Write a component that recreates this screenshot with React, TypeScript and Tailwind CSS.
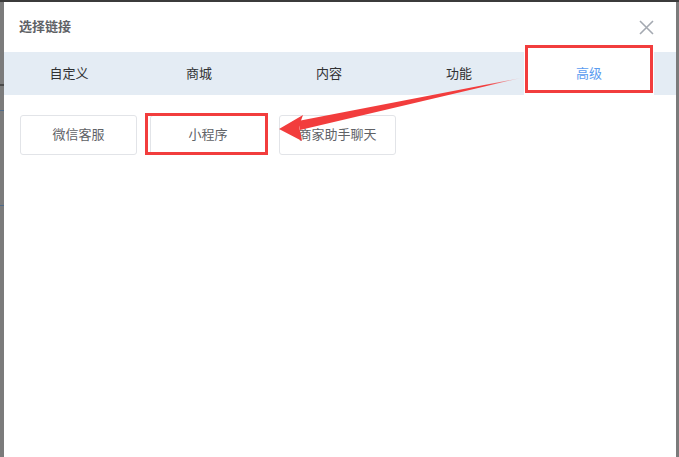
import React from 'react';

const tabs = ['自定义', '商城', '内容', '功能', '高级'];
const links = ['微信客服', '小程序', '商家助手聊天'];

export default function App() {
  const active = 4;
  return (
    <div
      className="relative w-[679px] h-[457px] overflow-hidden bg-[#7b7b7b]"
      style={{ fontFamily: '"Liberation Sans", "Noto Sans CJK SC", sans-serif' }}
    >
      {/* backdrop bits peeking out at the left */}
      <div className="absolute left-0 top-[84px] w-[4px] h-[2px] bg-[#4a4a4a]" />
      <div className="absolute left-0 top-[110px] w-[4px] h-px bg-[#4f6b8a]" />
      <div className="absolute left-0 top-[205px] w-[4px] h-px bg-[#4f6b8a]" />

      <div className="flex flex-col h-full pl-[4px] pr-[3px] border-t-2 border-[#3b3b3b]">
        <div className="flex-1 bg-white flex flex-col">
          {/* header */}
          <div className="h-[50px] flex items-center justify-between pl-[15px] pr-[22px]">
            <span className="text-[13px] font-bold text-[#5f6266]">选择链接</span>
            <svg width="15" height="15" viewBox="0 0 15 15" className="text-[#a4a9b1]">
              <path d="M1 1 L14 14 M14 1 L1 14" stroke="currentColor" strokeWidth="1.6" />
            </svg>
          </div>

          {/* tabs */}
          <div className="flex h-[43px] bg-[#e4ecf4]">
            {tabs.map((t, i) => (
              <div
                key={t}
                className={
                  'w-[130px] flex items-center justify-center text-[13px] ' +
                  (i === active ? 'bg-white text-[#5b9cf0]' : 'text-[#303133]')
                }
              >
                {t}
              </div>
            ))}
          </div>

          {/* links */}
          <div className="flex gap-[12.5px] pl-[16px] pt-[20px]">
            {links.map((l) => (
              <div
                key={l}
                className="w-[117px] h-[40px] flex items-center justify-center rounded-[3px] border border-[#e2e4e8] text-[13px] text-[#606266]"
              >
                {l}
              </div>
            ))}
          </div>
        </div>
      </div>

      {/* annotation overlays */}
      <div className="absolute left-[525px] top-[45px] w-[128px] h-[48px] border-[3px] border-[#f23d3d]" />
      <div className="absolute left-[145px] top-[113px] w-[123px] h-[42px] border-[3px] border-[#f23d3d]" />
      <svg className="absolute left-0 top-0" width="679" height="457" viewBox="0 0 679 457">
        <defs>
          <linearGradient id="tail" x1="520" y1="78" x2="290" y2="128" gradientUnits="userSpaceOnUse">
            <stop offset="0" stopColor="#f23d3d" stopOpacity="0.2" />
            <stop offset="0.15" stopColor="#f23d3d" />
            <stop offset="1" stopColor="#f23d3d" />
          </linearGradient>
        </defs>
        <polygon points="521,78 298,121 300,130" fill="url(#tail)" />
        <polygon points="279,129 303,115 299,126 302,141" fill="#f23d3d" />
      </svg>
    </div>
  );
}
